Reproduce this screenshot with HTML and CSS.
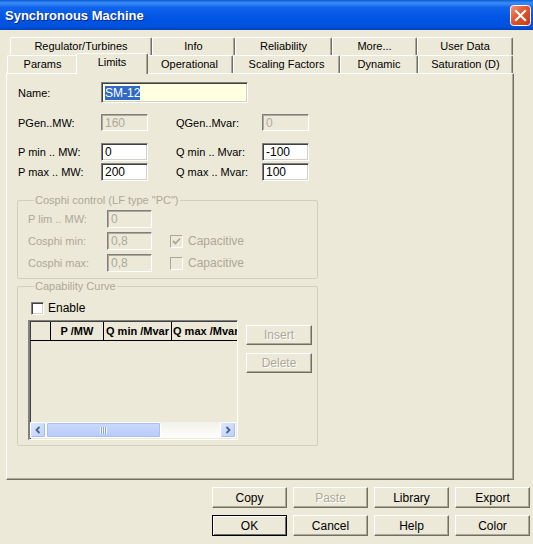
FILE: index.html
```html
<!DOCTYPE html>
<html lang="en">
<head>
  <meta charset="UTF-8">
  <title>Synchronous Machine</title>
  <link rel="stylesheet" href="styles.css">
</head>
<body>
  <div class="titlebar">
    <span class="title">Synchronous Machine</span>
    <svg class="close" width="21" height="21" viewBox="0 0 21 21">
      <defs>
        <linearGradient id="cg" x1="0" y1="0" x2="1" y2="1">
          <stop offset="0" stop-color="#F09A7E"/>
          <stop offset="0.45" stop-color="#E2552C"/>
          <stop offset="1" stop-color="#C23A10"/>
        </linearGradient>
      </defs>
      <rect x="0.5" y="0.5" width="20" height="20" rx="3" fill="url(#cg)" stroke="#fff"/>
      <path d="M6 6 L15 15 M15 6 L6 15" stroke="#fff" stroke-width="2.2" stroke-linecap="square"/>
    </svg>
  </div>

  <div class="tabs">
    <div class="tabrow row1">
      <div class="tab">Regulator/Turbines</div>
      <div class="tab">Info</div>
      <div class="tab">Reliability</div>
      <div class="tab">More...</div>
      <div class="tab">User Data</div>
    </div>
    <div class="tabrow row2">
      <div class="tab">Params</div>
      <div class="tab active">Limits</div>
      <div class="tab">Operational</div>
      <div class="tab">Scaling Factors</div>
      <div class="tab">Dynamic</div>
      <div class="tab">Saturation (D)</div>
    </div>
  </div>

  <div class="panel">
    <div class="frow name-row">
      <span class="lbl">Name:</span>
      <div class="edit name"><span class="sel">SM-12</span></div>
    </div>
    <div class="frow gen-row">
      <span class="lbl">PGen..MW:</span>
      <div class="edit off">160</div>
      <span class="lbl2">QGen..Mvar:</span>
      <div class="edit off">0</div>
    </div>
    <div class="frow min-row">
      <span class="lbl">P min .. MW:</span>
      <div class="edit">0</div>
      <span class="lbl2">Q min .. Mvar:</span>
      <div class="edit">-100</div>
    </div>
    <div class="frow max-row">
      <span class="lbl">P max .. MW:</span>
      <div class="edit">200</div>
      <span class="lbl2">Q max .. Mvar:</span>
      <div class="edit">100</div>
    </div>

    <div class="group cosphi">
      <span class="group-title">Cosphi control (LF type "PC")</span>
      <div class="crow first">
        <span class="clbl">P lim .. MW:</span>
        <div class="edit off small">0</div>
      </div>
      <div class="crow">
        <span class="clbl">Cosphi min:</span>
        <div class="edit off small">0,8</div>
        <span class="check off checked">
          <svg width="9" height="9" viewBox="0 0 9 9"><path d="M1 4 L3.5 6.5 L8 1.5" stroke="#ACA899" stroke-width="1.8" fill="none"/></svg>
        </span>
        <span class="check-text off">Capacitive</span>
      </div>
      <div class="crow last">
        <span class="clbl">Cosphi max:</span>
        <div class="edit off small">0,8</div>
        <span class="check off"></span>
        <span class="check-text off">Capacitive</span>
      </div>
    </div>

    <div class="group capability">
      <span class="group-title">Capability Curve</span>
      <div class="enable-row">
        <span class="check"></span>
        <span class="check-text">Enable</span>
      </div>
      <div class="curve">
        <div class="grid">
          <div class="grid-head">
            <div class="hc c0"></div>
            <div class="hc c1">P /MW</div>
            <div class="hc c2">Q min /Mvar</div>
            <div class="hc c3">Q max /Mvar</div>
          </div>
          <div class="grid-body"></div>
          <div class="hscroll">
            <div class="sbtn">
              <svg width="8" height="8" viewBox="0 0 8 8"><path d="M5.5 1 L2.5 4 L5.5 7" stroke="#4D6185" stroke-width="1.8" fill="none"/></svg>
            </div>
            <div class="track">
              <div class="thumb"><span class="grip"></span></div>
            </div>
            <div class="sbtn">
              <svg width="8" height="8" viewBox="0 0 8 8"><path d="M2.5 1 L5.5 4 L2.5 7" stroke="#4D6185" stroke-width="1.8" fill="none"/></svg>
            </div>
          </div>
        </div>
        <div class="curve-buttons">
          <div class="btn small off">Insert</div>
          <div class="btn small off">Delete</div>
        </div>
      </div>
    </div>
  </div>

  <div class="buttons">
    <div class="btn">Copy</div>
    <div class="btn off">Paste</div>
    <div class="btn">Library</div>
    <div class="btn">Export</div>
    <div class="btn default">OK</div>
    <div class="btn">Cancel</div>
    <div class="btn">Help</div>
    <div class="btn">Color</div>
  </div>
</body>
</html>
```

FILE: styles.css
```css
* {
  box-sizing: border-box;
}
body {
  margin: 0;
  width: 533px;
  height: 544px;
  overflow: hidden;
  background-color: #ECE9D8;
  font-family: "Liberation Sans", Arial, sans-serif;
  font-size: 11px;
  color: #000;
}
.titlebar {
  height: 30px;
  display: flex;
  align-items: center;
  padding: 0 2px 0 5px;
  background: linear-gradient(#0A5AD8 0%, #3D8EF6 10%, #0F63EC 25%, #0055E5 60%, #0050DC 90%, #0040B8 100%);
}
.title {
  color: #fff;
  font-weight: bold;
  font-size: 13px;
  text-shadow: 1px 1px #0B2A8A;
}
.close {
  margin-left: auto;
}

/* tabs */
.tabs {
  padding-top: 7px;
}
.tabrow {
  display: grid;
  height: 18px;
}
.row1 {
  grid-template-columns: 142px 83px 97px 85px 96px;
  margin-left: 10px;
}
.row2 {
  grid-template-columns: 71px 68px 87px 107px 78px 95px;
  margin-left: 7px;
}
.tab {
  border-top: 1px solid #fff;
  border-left: 1px solid #fff;
  border-right: 1px solid #716F64;
  box-shadow: inset -1px 0 #ACA899;
  border-radius: 2px 2px 0 0;
  background-color: #ECE9D8;
  text-align: center;
  line-height: 17px;
  white-space: nowrap;
}
.tab.active {
  margin: -2px -2px -1px -2px;
  position: relative;
  z-index: 1;
  line-height: 16px;
}

/* page panel */
.panel {
  width: 508px;
  height: 407px;
  margin-left: 6px;
  padding: 8px 0 0 10px;
  border-top: 1px solid #fff;
  border-left: 1px solid #fff;
  border-right: 1px solid #716F64;
  border-bottom: 1px solid #716F64;
  box-shadow: inset -1px -1px #ACA899;
}
.frow {
  display: flex;
  align-items: center;
  margin-left: 1px;
  height: 18px;
}
.name-row {
  height: 21px;
}
.gen-row {
  margin-top: 11px;
  height: 17px;
}
.min-row {
  margin-top: 12px;
}
.max-row {
  margin-top: 2px;
}
.lbl {
  width: 83px;
}
.lbl2 {
  width: 86px;
  margin-left: 28px;
}
.edit {
  width: 47px;
  height: 100%;
  padding: 1px 0 0 3px;
  background-color: #fff;
  border-top: 1px solid #808080;
  border-left: 1px solid #808080;
  border-right: 1px solid #fff;
  border-bottom: 1px solid #fff;
  box-shadow: inset 1px 1px #404040, inset -1px -1px #D4D0C8;
  font-size: 12px;
  line-height: 14px;
  white-space: nowrap;
}
.edit.name {
  width: 147px;
  background-color: #FFFFE1;
  padding-top: 3px;
}
.sel {
  background-color: #316AC5;
  color: #fff;
}
.edit.off {
  background-color: #ECE9D8;
  color: #ACA899;
  box-shadow: inset 1px 1px #ACA899, inset -1px -1px #ECE9D8;
}
.edit.small {
  width: 45px;
}

/* group boxes */
.group {
  width: 301px;
  border: 1px solid #D0D0BF;
  border-radius: 2px;
}
.group-title {
  display: block;
  width: max-content;
  margin: -7px 0 0 6px;
  padding: 0 1px;
  line-height: 13px;
  background-color: #ECE9D8;
  color: #ACA899;
}
.cosphi {
  margin-top: 19px;
  padding: 0 0 6px 10px;
  color: #ACA899;
}
.crow {
  display: flex;
  align-items: center;
  height: 18px;
  margin-top: 4px;
}
.crow.first {
  margin-top: 3px;
}
.crow.last {
  margin-top: 4px;
}
.clbl {
  width: 79px;
}
.check {
  width: 13px;
  height: 13px;
  margin-left: 18px;
  display: flex;
  align-items: center;
  justify-content: center;
  background-color: #fff;
  border-top: 1px solid #808080;
  border-left: 1px solid #808080;
  border-right: 1px solid #fff;
  border-bottom: 1px solid #fff;
  box-shadow: inset 1px 1px #404040, inset -1px -1px #D4D0C8;
}
.check.off {
  background-color: #ECE9D8;
  border-color: #ACA899 #fff #fff #ACA899;
  box-shadow: none;
}
.check-text {
  margin-left: 5px;
  font-size: 12px;
}
.check-text.off {
  color: #ACA899;
}
.capability {
  margin-top: 7px;
  padding: 0 0 5px 10px;
}
.enable-row {
  display: flex;
  align-items: center;
  margin-top: 8px;
}
.enable-row .check {
  margin-left: 3px;
}
.enable-row .check-text {
  margin-left: 4px;
}
.curve {
  display: flex;
  margin-top: 5px;
}
.grid {
  width: 210px;
  height: 120px;
  display: flex;
  flex-direction: column;
  border-top: 1px solid #808080;
  border-left: 2px solid #808080;
  border-right: 1px solid #fff;
  border-bottom: 1px solid #fff;
  box-shadow: inset 1px 1px #404040;
  padding: 1px 0 1px 0;
}
.grid-head {
  display: flex;
  height: 19px;
  border-bottom: 1px solid #000;
  font-weight: bold;
  line-height: 18px;
}
.hc {
  border-right: 1px solid #000;
  white-space: nowrap;
  overflow: hidden;
  text-align: center;
}
.c0 {
  width: 21px;
}
.c1 {
  width: 53px;
}
.c2 {
  width: 68px;
  text-align: left;
  padding-left: 2px;
}
.c3 {
  flex: 1;
  border-right: none;
  text-align: left;
  padding-left: 1px;
}
.grid-body {
  flex: 1;
}
.hscroll {
  display: flex;
  height: 16px;
  margin: 0 1px 0 0;
  background: linear-gradient(#F3F1EA, #FEFEFB);
}
.sbtn {
  width: 16px;
  height: 16px;
  display: flex;
  align-items: center;
  justify-content: center;
  border: 1px solid #fff;
  border-radius: 2px;
  background: linear-gradient(135deg, #DDE8FE, #BCD0FA);
  box-shadow: inset -1px -1px #A6BDF0;
}
.track {
  flex: 1;
}
.thumb {
  width: 115px;
  height: 16px;
  display: flex;
  align-items: center;
  justify-content: center;
  border: 1px solid #fff;
  border-radius: 2px;
  background: linear-gradient(#CAD9FD, #B8CBF8);
  box-shadow: inset 0 0 0 1px #A9C0F2;
}
.grip {
  width: 7px;
  height: 7px;
  background: repeating-linear-gradient(90deg, #EEF3FE 0 1px, #8CA6DD 1px 2px);
}
.curve-buttons {
  display: flex;
  flex-direction: column;
  gap: 8px;
  margin: 5px 0 0 8px;
}

/* buttons */
.btn {
  width: 75px;
  height: 21px;
  display: flex;
  align-items: center;
  justify-content: center;
  font-size: 12px;
  background-color: #ECE9D8;
  border-top: 1px solid #fff;
  border-left: 1px solid #fff;
  border-right: 1px solid #716F64;
  border-bottom: 1px solid #716F64;
  box-shadow: inset -1px -1px #ACA899;
}
.btn.small {
  width: 66px;
  height: 20px;
}
.btn.off {
  color: #ACA899;
  text-shadow: 1px 1px #fff;
}
.btn.default {
  border: 1px solid #000;
  box-shadow: inset 1px 1px #fff, inset -1px -1px #716F64;
}
.buttons {
  display: grid;
  grid-template-columns: repeat(4, 75px);
  column-gap: 6px;
  row-gap: 7px;
  margin: 7px 0 0 212px;
}
```
